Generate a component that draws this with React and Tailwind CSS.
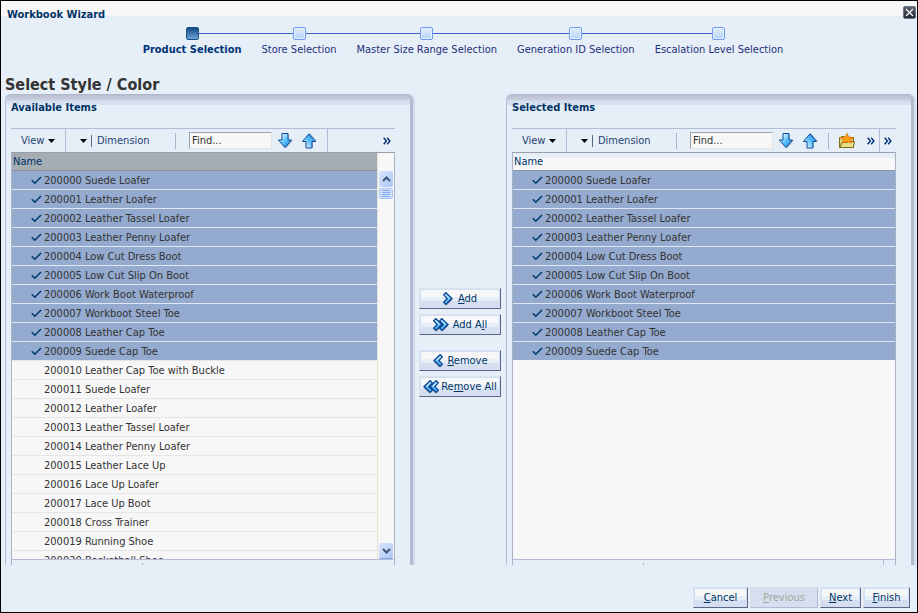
import React, {useState} from 'react';
import clsx from 'clsx';

const steps = [
   'Product Selection',
   'Store Selection',
   'Master Size Range Selection',
   'Generation ID Selection',
   'Escalation Level Selection',
];

const items = [
   '200000 Suede Loafer',
   '200001 Leather Loafer',
   '200002 Leather Tassel Loafer',
   '200003 Leather Penny Loafer',
   '200004 Low Cut Dress Boot',
   '200005 Low Cut Slip On Boot',
   '200006 Work Boot Waterproof',
   '200007 Workboot Steel Toe',
   '200008 Leather Cap Toe',
   '200009 Suede Cap Toe',
   '200010 Leather Cap Toe with Buckle',
   '200011 Suede Loafer',
   '200012 Leather Loafer',
   '200013 Leather Tassel Loafer',
   '200014 Leather Penny Loafer',
   '200015 Leather Lace Up',
   '200016 Lace Up Loafer',
   '200017 Lace Up Boot',
   '200018 Cross Trainer',
   '200019 Running Shoe',
   '200020 Basketball Shoe',
];

const Check = () => (
   <svg width="11" height="10" viewBox="0 0 11 10" className="shrink-0">
      <path d="M0.8 4.2 L3.8 7.2 L10 1" fill="none" stroke="#003a70" strokeWidth="1.6" />
   </svg>
);

const Caret = () => (
   <svg width="7" height="4" viewBox="0 0 7 4" className="shrink-0">
      <path d="M0 0 H7 L3.5 4 Z" fill="#000" />
   </svg>
);

const More = () => (
   <svg width="8" height="8" viewBox="0 0 8 8">
      <path
         d="M0.7 0.8 L3.4 4 L0.7 7.2 M4.2 0.8 L6.9 4 L4.2 7.2"
         fill="none"
         stroke="#002f76"
         strokeWidth="1.4"
      />
   </svg>
);

const Arrow = ({up}) => (
   <svg width="15" height="16" viewBox="0 0 15 16">
      <defs>
         <linearGradient id={up ? 'arrowUp' : 'arrowDown'} x1="0" y1="0" x2="1" y2="1">
            <stop offset="0.2" stopColor="#d4f0ff" />
            <stop offset="0.5" stopColor="#5cc0fa" />
            <stop offset="1" stopColor="#1a80e0" />
         </linearGradient>
      </defs>
      <g transform={up ? 'matrix(1 0 0 -1 0 15.5)' : undefined}>
         <path
            d="M5 1.5 H11 V7.5 H14.8 L8 15.6 L1.5 7.5 H5 Z"
            fill="#8a97a8"
            opacity="0.6"
         />
         <path
            d="M4 0.5 H10 V7 H13.6 L7 14.6 L0.4 7 H4 Z"
            fill={up ? 'url(#arrowUp)' : 'url(#arrowDown)'}
            stroke="#0a4a9c"
         />
      </g>
   </svg>
);

const FavoriteFolder = () => (
   <svg width="16" height="16" viewBox="0 0 16 16">
      <path d="M0.5 14.5 V4.5 H1.5 L2.5 3.5 H5 L6 4.5 H14.5 V14.5 Z" fill="#d9cf78" stroke="#7d6a14" />
      <path d="M1 14.5 L3 9.5 H8 L9.5 8.5 H15.4 L14.4 14.5 Z" fill="#e6e08c" stroke="#7d6a14" />
      <path
         d="M8 0.4 L9.8 4 L14.6 4.6 L11.3 7.2 L12.4 10 L8 8.8 L3.6 10 L4.7 7.2 L1.4 4.6 L6.2 4 Z"
         fill="#ff9d14"
         stroke="#d96a00"
         strokeWidth="0.7"
      />
   </svg>
);

const Chevrons = ({left, count}) => (
   <svg
      width={count === 2 ? 16 : 11}
      height="14"
      viewBox={count === 2 ? '0 0 16 14' : '0 0 11 14'}
      className="shrink-0">
      <g transform={left ? `matrix(-1 0 0 1 ${count === 2 ? 16 : 11} 0)` : undefined}>
         {[0, 6].slice(0, count).map((x) => (
            <g key={x} transform={`translate(${x} 0)`}>
               <path d="M2.5 2.5 L7.5 7.5 L2.5 12.5" fill="none" stroke="#8a97a8" strokeWidth="3" />
               <path
                  d="M0.6 2.8 L2.8 0.6 L9 6.5 L2.8 12.4 L0.6 10.2 L4.2 6.5 Z"
                  fill="#4fb2f7"
                  stroke="#0a3f8c"
                  strokeWidth="1.2"
               />
               <path d="M2.2 2.4 L6.4 6.5" stroke="#c9ecff" strokeWidth="1.2" />
            </g>
         ))}
      </g>
   </svg>
);

const WizardButton = ({children, className, disabled}) => (
   <button
      type="button"
      disabled={disabled}
      className={clsx(
         'flex h-[21px] items-center justify-center border text-[11px] leading-none whitespace-nowrap',
         disabled
            ? 'border-[#d6dfef] border-r-[#b5bbcf] border-b-[#b5bbcf] bg-[#d6dfef] text-[#a3a69c]'
            : 'border-[#dfe3e8] border-r-[#636580] border-b-[#636580] bg-[linear-gradient(#f7f7f7_40%,#e6eff7_40%,#e6eff7_65%,#d6dfef_65%)] text-[#003366] shadow-[inset_1px_1px_#c9dffa,inset_-1px_-1px_#c9dffa]',
         className
      )}>
      {children}
   </button>
);

const Train = () => (
   <ol className="flex justify-center pl-2">
      {steps.map((step, i) => (
         <li key={step} className="flex flex-col">
            <div className="flex items-center">
               <span className={clsx('h-px flex-1', i > 0 && 'bg-[#3a66cc]')} />
               <span
                  className={clsx(
                     'size-[13px] rounded-[2px] border',
                     i === 0
                        ? 'border-[#1c5187] bg-linear-to-b from-[#0f4a82] to-[#6fa3d6]'
                        : 'border-[#6f9af0] bg-linear-to-b from-[#e3ebf8] to-[#b4d4fb] shadow-[inset_0_0_0_1px_#e6f2ff]'
                  )}
               />
               <span
                  className={clsx('h-px flex-1', i < steps.length - 1 && 'bg-[#3a66cc]')}
               />
            </div>
            <a
               href="#"
               aria-current={i === 0 ? 'step' : undefined}
               className={clsx(
                  'mt-[3px] px-2.5 leading-[14px] whitespace-nowrap',
                  i === 0 ? 'font-bold text-[#003377]' : 'text-[#1f2f7a]'
               )}>
               {step}
            </a>
         </li>
      ))}
   </ol>
);

const Toolbar = ({title, favorites}) => {
   const [find, setFind] = useState('Find...');

   return (
      <div className="flex h-[24px] items-center border-t border-[#b5bbd6] text-[#1f3f73]">
         <button type="button" className="flex h-full w-[55px] items-center gap-1 border-r border-[#b5bbd6] pl-2.5">
            View <Caret />
         </button>
         <button type="button" aria-label="Dimension menu" className="ml-[14px]">
            <Caret />
         </button>
         <span className="ml-1 h-3 w-px bg-[#5a6a80]" />
         <button type="button" className="ml-[5px] w-[78px] text-left">
            Dimension
         </button>
         <span className="h-4 w-px bg-[#a9b3c6]" />
         <input
            type="text"
            aria-label={`Find in ${title}`}
            value={find}
            onChange={(e) => setFind(e.target.value)}
            className="ml-[13px] h-[17px] w-[83px] border border-[#e3e3e3] border-t-[#9aa3ad] border-l-[#9aa3ad] bg-[#f7f7f7] px-0.5 text-[#333] outline-none"
         />
         <button type="button" aria-label="Find next" className="ml-1.5">
            <Arrow />
         </button>
         <button type="button" aria-label="Find previous" className="ml-[9px]">
            <Arrow up />
         </button>
         {favorites ? (
            <>
               <span className="ml-2.5 h-4 w-px bg-[#a9b3c6]" />
               <button type="button" aria-label="Favorites" className="ml-2.5">
                  <FavoriteFolder />
               </button>
               <button type="button" aria-label="More tools" className="ml-auto pr-1">
                  <More />
               </button>
               <span className="h-full w-px bg-[#b5bbd6]" />
               <button type="button" aria-label="More" className="px-1">
                  <More />
               </button>
            </>
         ) : (
            <>
               <span className="ml-2.5 h-full w-px bg-[#b5bbd6]" />
               <button type="button" aria-label="More" className="ml-auto pr-1">
                  <More />
               </button>
            </>
         )}
      </div>
   );
};

const ItemTable = ({rows, active}) => (
   <table className="w-full border-collapse">
      <thead>
         <tr>
            <th
               className={clsx(
                  'h-[17px] border-b border-[#8e9399] p-0 pt-0.5 pl-px text-left font-normal text-[#003366]',
                  active
                     ? 'bg-[#a5adb3]'
                     : 'bg-[linear-gradient(#e6eff7_5px,#f7f7f7_5px)]'
               )}>
               Name
            </th>
         </tr>
      </thead>
      <tbody>
         {rows.map((item) => {
            const selected = items.indexOf(item) < 10;
            return (
               <tr
                  key={item}
                  className={selected ? 'bg-[#94aace]' : 'bg-[#f7f7f7]'}>
                  <td
                     className={clsx(
                        'h-[19px] border-t p-0 text-[#333]',
                        selected ? 'border-[#dfe8f2]' : 'border-[#e5e5e5]'
                     )}>
                     <div className="flex items-center gap-0.5 pt-0.5 pl-[19px] leading-4 whitespace-nowrap">
                        {selected ? <Check /> : <span className="w-[11px]" />}
                        {item}
                     </div>
                  </td>
               </tr>
            );
         })}
      </tbody>
   </table>
);

const Scrollbar = () => (
   <div className="flex w-[17px] shrink-0 flex-col items-center border-l border-[#e5e2d0] bg-[#f7f7f7] pt-[18px]">
      <button
         type="button"
         aria-label="Scroll up"
         className="flex h-4 w-3.5 items-center justify-center rounded-[2px] bg-linear-to-br from-[#dbe6fd] to-[#a9c6f5]">
         <svg width="9" height="6" viewBox="0 0 9 6">
            <path d="M1 5 L4.5 1.5 L8 5" fill="none" stroke="#3f5878" strokeWidth="2" />
         </svg>
      </button>
      <div className="mt-px flex h-[11px] w-3.5 flex-col items-center justify-center gap-px rounded-[2px] border border-[#a9c6f5] bg-[#cfdffc]">
         <span className="h-px w-2 bg-[#84aaf0]" />
         <span className="h-px w-2 bg-[#84aaf0]" />
         <span className="h-px w-2 bg-[#84aaf0]" />
         <span className="h-px w-2 bg-[#84aaf0]" />
      </div>
      <button
         type="button"
         aria-label="Scroll down"
         className="mt-auto flex h-4 w-3.5 items-center justify-center rounded-[2px] border-b border-[#7da3dd] bg-linear-to-br from-[#dbe6fd] to-[#a9c6f5]">
         <svg width="9" height="6" viewBox="0 0 9 6">
            <path d="M1 1 L4.5 4.5 L8 1" fill="none" stroke="#3f5878" strokeWidth="2" />
         </svg>
      </button>
   </div>
);

const Panel = ({title, rows, active, favorites}) => (
   <section className="flex min-h-0 min-w-0 flex-col rounded-t-[6px] border-t border-r-[3px] border-l border-t-[#b0b6cc] border-r-[#b5bbcf] border-l-[#b5bbd6] bg-[linear-gradient(#b8becf,#c9d0df_5px,#d6dfef_6px,#d6dfef_10px,#e6eff7_10px)] pr-[15px] pl-[5px] shadow-[2px_0_#d6dbef]">
      <h2 className="pt-1.5 pb-[13px] text-[11px] leading-[14px] font-bold text-[#003366]">{title}</h2>
      <Toolbar title={title} favorites={favorites} />
      <div className="flex min-h-0 flex-1 border border-t-[#9aa0ab] border-r-[#a9b3c6] border-b-[#b5bbd6] border-l-[#a9b3c6] bg-[#f7f7f7]">
         <div className="min-w-0 flex-1 overflow-hidden">
            <ItemTable rows={rows} active={active} />
         </div>
         {active && <Scrollbar />}
      </div>
      <div className="flex h-[5px] items-end border-x border-[#a9b3c6] pl-[130px]">
         <span className="h-0.5 w-px bg-[#a9b3c6]" />
         {favorites && <span className="mr-[11px] ml-auto h-full w-px bg-[#b5bbd6]" />}
      </div>
   </section>
);

const App = () => {
   return (
      <div className="flex h-screen flex-col border border-black bg-[#e6eff7] font-['DejaVu_Sans_Condensed','Noto_Sans',sans-serif] text-[11px] leading-[14px]">
         {/* Title bar */}
         <header className="flex h-[26px] shrink-0 items-start justify-between bg-[linear-gradient(#f7f7f7_15px,#e6eff7_15px)] pt-[5px] pr-px pl-1.5">
            <h1 className="pt-0.5 font-bold text-[#003366]">Workbook Wizard</h1>
            <button
               type="button"
               aria-label="Close"
               className="flex size-[13px] items-center justify-center rounded-[2px] border border-[#6b7686] bg-linear-to-b from-[#5a6270] to-[#20262e]">
               <svg width="9" height="9" viewBox="0 0 9 9">
                  <path d="M1 1 L8 8 M8 1 L1 8" stroke="#fff" strokeWidth="1.2" />
               </svg>
            </button>
         </header>

         <Train />

         <h2 className="mt-[19px] pl-1 text-[16px] leading-[18px] font-bold text-[#333]">
            Select Style / Color
         </h2>

         {/* Shuttle */}
         <main className="grid min-h-0 flex-1 grid-cols-[minmax(0,1fr)_93px_minmax(0,1fr)] grid-rows-[minmax(0,1fr)] pr-[3px] pl-1">
            <Panel title="Available Items" rows={items} active />
            <div className="flex flex-col justify-center gap-[5px] pt-[26px] pr-[5px] pl-1.5">
               <WizardButton className="gap-1">
                  <Chevrons count={1} />
                  <span><u>A</u>dd</span>
               </WizardButton>
               <WizardButton className="gap-1">
                  <Chevrons count={2} />
                  <span>Add A<u>l</u>l</span>
               </WizardButton>
               <WizardButton className="mt-2.5 gap-1">
                  <Chevrons left count={1} />
                  <span><u>R</u>emove</span>
               </WizardButton>
               <WizardButton className="gap-0.5">
                  <Chevrons left count={2} />
                  <span>Re<u>m</u>ove All</span>
               </WizardButton>
            </div>
            <Panel title="Selected Items" rows={items.slice(0, 10)} favorites />
         </main>

         {/* Footer */}
         <footer className="flex shrink-0 justify-end gap-0.5 pt-[22px] pr-[7px] pb-1">
            <WizardButton className="w-[55px]">
               <span><u>C</u>ancel</span>
            </WizardButton>
            <WizardButton className="w-[68px]" disabled>
               <span><u>P</u>revious</span>
            </WizardButton>
            <WizardButton className="w-[41px]">
               <span><u>N</u>ext</span>
            </WizardButton>
            <WizardButton className="w-[47px]">
               <span><u>F</u>inish</span>
            </WizardButton>
         </footer>
      </div>
   );
};

export default App;
